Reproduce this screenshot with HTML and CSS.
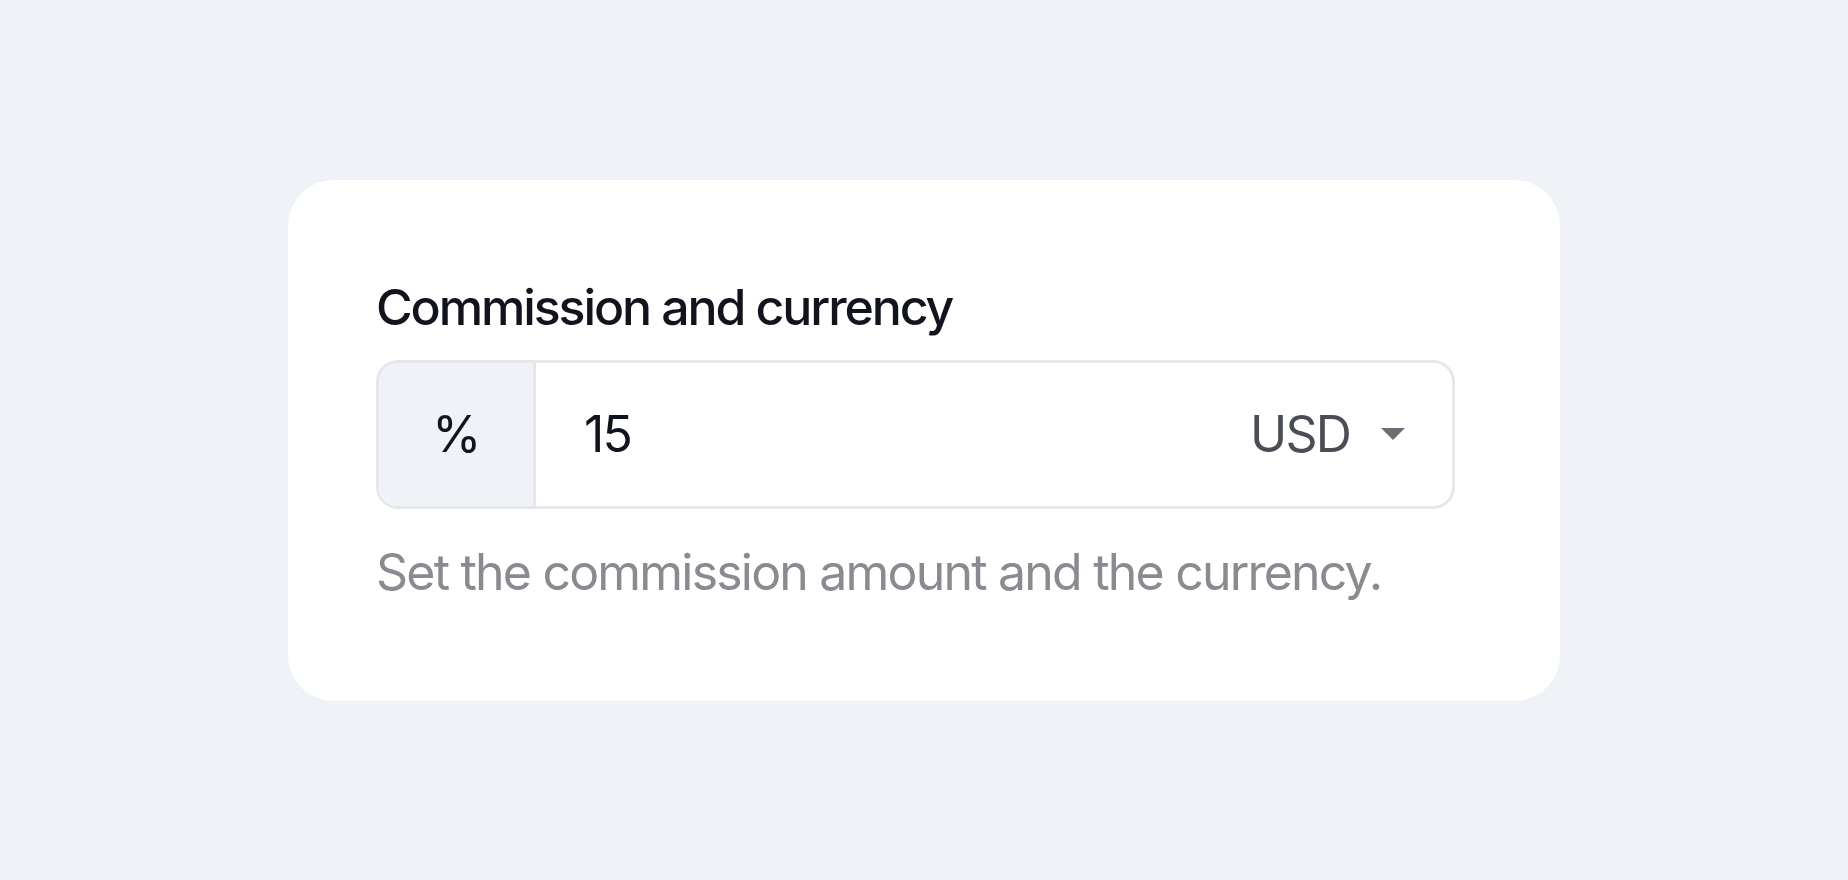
FILE: index.html
```html
<!DOCTYPE html>
<html lang="en">
<head>
    <meta charset="UTF-8">
    <meta name="viewport" content="width=device-width, initial-scale=1.0">
    <title>Commission and currency</title>
    <link rel="stylesheet" href="styles.css">
</head>
<body>
    <div class="card">
        <label class="field-label" for="commission">Commission and currency</label>
        <div class="input-group">
            <span class="prefix">%</span>
            <input type="text" id="commission" class="amount" value="15">
            <div class="currency">
                <span>USD</span>
                <svg class="caret" width="24" height="12" viewBox="0 0 24 12">
                    <path d="M0 0 L24 0 L12 12 Z" fill="#6b6e75"/>
                </svg>
            </div>
        </div>
        <p class="help">Set the commission amount and the currency.</p>
    </div>
</body>
</html>
```

FILE: styles.css
```css
body {
    margin: 0;
    height: 100vh;
    background: #eff2f7;
    font-family: Inter, "Noto Sans", sans-serif;
    letter-spacing: -1.8px;
    display: flex;
    justify-content: center;
    align-items: center;
}
.card {
    box-sizing: border-box;
    width: 1272px;
    height: 521px;
    background: #ffffff;
    border-radius: 46px;
    padding: 97px 88px 0 88px;
}
.field-label {
    display: block;
    font-size: 50px;
    font-weight: 500;
    line-height: 60px;
    letter-spacing: -2.1px;
    color: #11141c;
    margin-bottom: 23px;
}
.input-group {
    box-sizing: border-box;
    display: flex;
    width: 1079px;
    height: 149px;
    border: 3px solid #e5e7eb;
    border-radius: 22px;
    overflow: hidden;
}
.prefix {
    width: 154px;
    background: #eff3f8;
    border-right: 3px solid #e5e7eb;
    display: flex;
    justify-content: center;
    align-items: center;
    font-size: 50px;
    color: #11141c;
}
.amount {
    flex: 1;
    min-width: 0;
    border: none;
    outline: none;
    padding: 0 0 0 48px;
    font-family: inherit;
    letter-spacing: inherit;
    font-size: 50px;
    color: #11141c;
    background: transparent;
}
.currency {
    display: flex;
    align-items: center;
    gap: 31px;
    padding-right: 47px;
    font-size: 50px;
    color: #4a4d53;
}
.caret {
    display: block;
}
.help {
    margin: 33px 0 0 0;
    font-size: 50px;
    line-height: 60px;
    color: #8a8b90;
}
```
